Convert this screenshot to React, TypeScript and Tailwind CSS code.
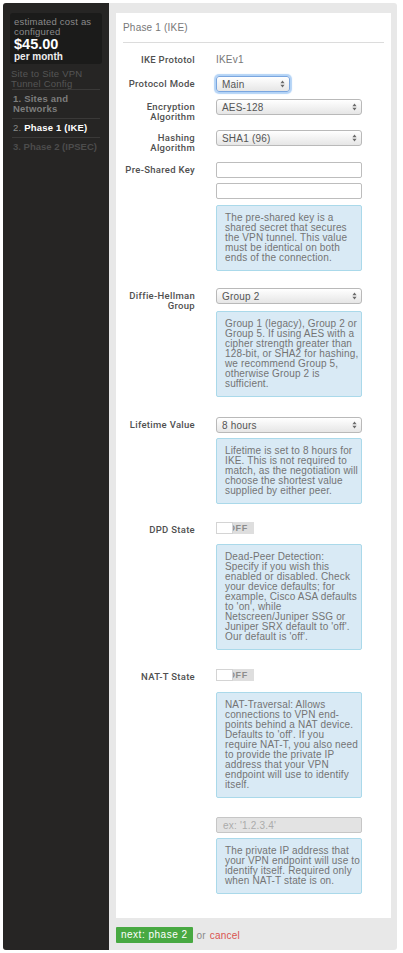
import React from 'react';

const font = { fontFamily: '"Liberation Sans", Arial, sans-serif' };
const labelFont = { fontFamily: 'Roboto, "Liberation Sans", Arial, sans-serif' };

function Arrows({ className }: { className: string }) {
  return (
    <svg className={className} width="5" height="8" viewBox="0 0 5 8">
      <path d="M2.5 0.5L4.6 3.2H0.4Z M2.5 7.5L0.4 4.8H4.6Z" fill="#6a6a6a" />
    </svg>
  );
}

function Select({ value, narrow, focus }: { value: string; narrow?: boolean; focus?: boolean }) {
  return (
    <div
      className={`relative flex h-[16px] items-center rounded-[3px] border bg-linear-to-b from-white to-[#e6e6e6] pl-[5px] text-[10px] tracking-[0.2px] text-[#555] ${
        narrow ? 'w-[74px]' : 'w-[146px]'
      } ${focus ? 'border-[#7aa6df] shadow-[0_0_1px_2px_#b3d3f6]' : 'border-[#b9b9b9]'}`}
    >
      {value}
      <Arrows className="absolute right-[4px] top-[3px]" />
    </div>
  );
}

function Help({ lines, className = '' }: { lines: string[]; className?: string }) {
  return (
    <div
      className={`w-[146px] rounded-[2px] border border-[#aad9ea] bg-[#d9eaf5] px-[8px] py-[7px] text-[10px] leading-[10px] tracking-[0.15px] whitespace-nowrap text-[#747474] ${className}`}
    >
      {lines.map((l, i) => (
        <div key={i}>{l}</div>
      ))}
    </div>
  );
}

function Toggle() {
  return (
    <div className="relative h-[12px] w-[38px] bg-[#dedede]">
      <span className="absolute left-[12px] top-[1px] text-[9px] leading-[10px] font-bold tracking-[0.6px] text-[#8c8c8c]">OFF</span>
      <div className="absolute left-0 top-0 h-[12px] w-[17px] border border-[#d4d4d4] bg-white" />
    </div>
  );
}

function Row({ label, className = '', children }: { label: React.ReactNode; className?: string; children: React.ReactNode }) {
  return (
    <div className={`flex items-start gap-[21px] ${className}`}>
      <div
        className="w-[72px] shrink-0 pt-[3px] text-right text-[9.5px] leading-[10px] font-medium tracking-[0.3px] whitespace-nowrap text-[#505050]"
        style={labelFont}
      >
        {label}
      </div>
      <div className="flex w-[146px] flex-col">{children}</div>
    </div>
  );
}

export default function App() {
  return (
    <div className="min-h-screen bg-white p-[3px]" style={font}>
      <div className="flex w-[394px] overflow-hidden rounded-[3px] bg-[#e8e8e8]">
        <aside className="w-[106px] shrink-0 bg-[#262524] px-[7px] pt-[10px]">
          <div className="rounded-[3px] bg-[#1b1b1a] px-[4px] pt-[4px] pb-[2px]">
            <div className="text-[9.5px] leading-[10px] tracking-[0.2px] text-[#8a8a8a]">
              estimated cost as
              <br />
              configured
            </div>
            <div className="text-[14.5px] leading-[15px] font-bold text-white">$45.00</div>
            <div className="text-[10px] leading-[10px] font-bold text-[#eeeeee]">per month</div>
          </div>
          <div className="mt-[5px] pl-[1px] text-[9.5px] leading-[10px] tracking-[0.2px] text-[#555]">
            Site to Site VPN
            <br />
            Tunnel Config
          </div>
          <div className="mx-[2px] border-b border-[#3a3938]" />
          <div className="mx-[2px] border-b border-[#3a3938] pt-[4px] pb-[4px] pl-[1px] text-[9.5px] leading-[10px] font-bold tracking-[0.2px] text-[#7d7d7d]">
            1. Sites and
            <br />
            Networks
          </div>
          <div className="mx-[2px] border-b border-[#3a3938] pt-[4px] pb-[4px] pl-[1px] text-[9.5px] leading-[10px] tracking-[0.2px] whitespace-nowrap">
            <span className="text-[#8a8a8a]">2. </span>
            <span className="font-bold text-white">Phase 1 (IKE)</span>
          </div>
          <div className="mx-[2px] pt-[4px] pl-[1px] text-[9.5px] leading-[10px] font-bold whitespace-nowrap text-[#4c4c4c]">
            3. Phase 2 (IPSEC)
          </div>
        </aside>

        <main className="flex-1 pt-[10px] pr-[6px] pb-[7px] pl-[7px]">
          <div className="h-[905px] bg-white px-[7px] pt-[9px]">
            <div className="border-b border-[#dcdcdc] pb-[8px] text-[10px] leading-[12px] tracking-[0.2px] text-[#777]">Phase 1 (IKE)</div>

            <Row label="IKE Prototol" className="mt-[9px]">
              <div className="pt-[3px] text-[10px] leading-[10px] tracking-[0.2px] text-[#777]">IKEv1</div>
            </Row>

            <Row label="Protocol Mode" className="mt-[11px]">
              <Select value="Main" narrow focus />
            </Row>

            <Row label={<>Encryption<br />Algorithm</>} className="mt-[7px]">
              <Select value="AES-128" />
            </Row>

            <Row label={<>Hashing<br />Algorithm</>} className="mt-[8px]">
              <Select value="SHA1 (96)" />
            </Row>

            <Row label="Pre-Shared Key" className="mt-[9px]">
              <div className="h-[16px] rounded-[2px] border border-[#bdbdbd] bg-white" />
              <div className="mt-[5px] h-[16px] rounded-[2px] border border-[#bdbdbd] bg-white" />
              <Help
                className="mt-[6px]"
                lines={[
                  'The pre-shared key is a',
                  'shared secret that secures',
                  'the VPN tunnel. This value',
                  'must be identical on both',
                  'ends of the connection.',
                ]}
              />
            </Row>

            <Row label={<>Diffie-Hellman<br />Group</>} className="mt-[17px]">
              <Select value="Group 2" />
              <Help
                className="mt-[7px]"
                lines={[
                  'Group 1 (legacy), Group 2 or',
                  'Group 5. If using AES with a',
                  'cipher strength greater than',
                  '128-bit, or SHA2 for hashing,',
                  'we recommend Group 5,',
                  'otherwise Group 2 is',
                  'sufficient.',
                ]}
              />
            </Row>

            <Row label="Lifetime Value" className="mt-[20px]">
              <Select value="8 hours" />
              <Help
                className="mt-[5px]"
                lines={[
                  'Lifetime is set to 8 hours for',
                  'IKE. This is not required to',
                  'match, as the negotiation will',
                  'choose the shortest value',
                  'supplied by either peer.',
                ]}
              />
            </Row>

            <Row label="DPD State" className="mt-[18px]">
              <Toggle />
              <Help
                className="mt-[10px]"
                lines={[
                  'Dead-Peer Detection:',
                  'Specify if you wish this',
                  'enabled or disabled. Check',
                  'your device defaults; for',
                  'example, Cisco ASA defaults',
                  "to 'on', while",
                  'Netscreen/Juniper SSG or',
                  "Juniper SRX default to 'off'.",
                  "Our default is 'off'.",
                ]}
              />
            </Row>

            <Row label="NAT-T State" className="mt-[19px]">
              <Toggle />
              <Help
                className="mt-[11px]"
                lines={[
                  'NAT-Traversal: Allows',
                  'connections to VPN end-',
                  'points behind a NAT device.',
                  "Defaults to 'off'. If you",
                  'require NAT-T, you also need',
                  'to provide the private IP',
                  'address that your VPN',
                  'endpoint will use to identify',
                  'itself.',
                ]}
              />
              <div className="mt-[19px] flex h-[16px] items-center rounded-[2px] border border-[#c6c6c6] bg-[#e3e3e3] pl-[6px] text-[10px] tracking-[0.2px] text-[#ababab]">
                ex: '1.2.3.4'
              </div>
              <Help
                className="mt-[5px]"
                lines={[
                  'The private IP address that',
                  'your VPN endpoint will use to',
                  'identify itself. Required only',
                  'when NAT-T state is on.',
                ]}
              />
            </Row>
          </div>

          <div className="mt-[9px] flex items-center gap-[4px] text-[10px] tracking-[0.2px]">
            <button className="h-[16px] rounded-[1px] bg-[#48a942] px-[5px] text-[10px] leading-[16px] tracking-[0.5px] text-white">
              next: phase 2
            </button>
            <span className="text-[#8a8a8a]">or</span>
            <span className="text-[#d9534f]">cancel</span>
          </div>
        </main>
      </div>
    </div>
  );
}
